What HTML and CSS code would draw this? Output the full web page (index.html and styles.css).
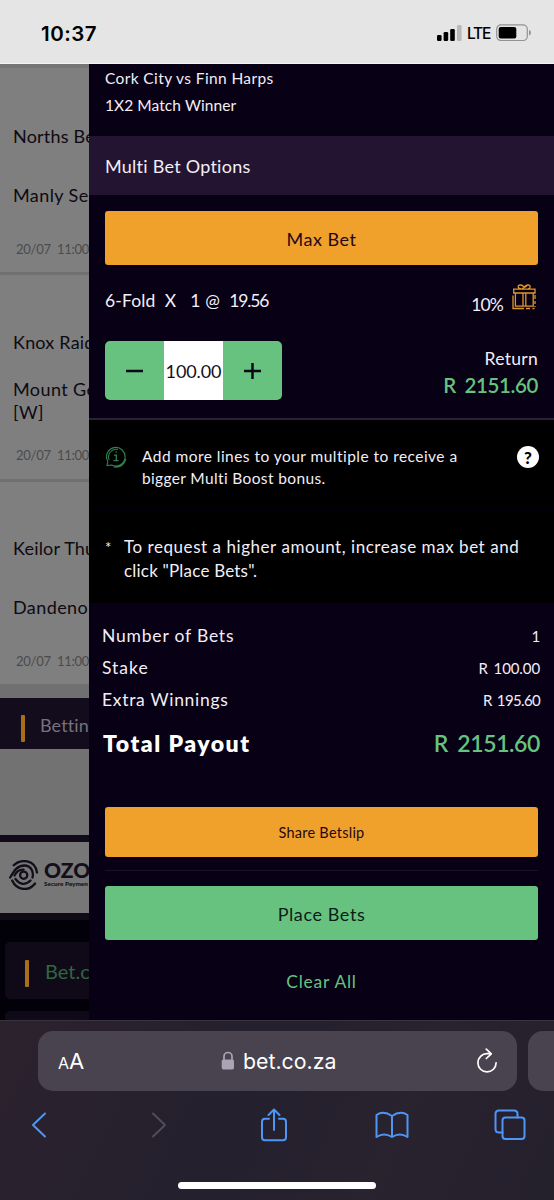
FILE: index.html
```html
<!DOCTYPE html>
<html lang="en">
<head>
<meta charset="utf-8">
<title>Betslip</title>
<link rel="stylesheet" href="styles.css">
</head>
<body>
<div class="phone">
  <header class="status">
    <span class="clock">10:37</span>
    <svg class="signal" width="25" height="16" viewBox="0 0 25 16"><rect x="0" y="10" width="4.6" height="6" rx="1.3"/><rect x="6.6" y="7" width="4.6" height="9" rx="1.3"/><rect x="13.2" y="4" width="4.6" height="12" rx="1.3"/><rect x="20" y="0" width="4.6" height="16" rx="1.3" fill="#b9b9b9"/></svg>
    <span class="network">LTE</span>
    <svg class="battery" width="36" height="18" viewBox="0 0 36 18"><rect x=".7" y=".9" width="30.6" height="15.6" rx="4.2" fill="none" stroke="#929292" stroke-width="1.2"/><rect x="2.7" y="2.9" width="17.6" height="11.6" rx="2"/><path d="M33 6q2 .6 2 2.7T33 11.400z" fill="#929292"/></svg>
  </header>

  <main class="screen">
    <section class="page">
      <div class="match first">
        <p class="team">Norths Be</p><p class="team second">Manly Se</p>
        <p class="date">20/07&nbsp; 11:00</p>
      </div>
      <div class="match mid">
        <p class="team">Knox Raid</p><p class="team wrapped">Mount Ge<br>[W]</p>
        <p class="date">20/07&nbsp; 11:00</p>
      </div>
      <div class="match last">
        <p class="team">Keilor Thu</p><p class="team second">Dandeno</p>
        <p class="date">20/07&nbsp; 11:00</p>
      </div>
      <div class="gap"></div>
      <div class="betting"><i class="bar"></i><span>Bettin</span></div>
      <div class="blank"></div>
      <div class="ozow">
        <svg class="swirl" width="30" height="30" viewBox="0 0 30 30" fill="none" stroke="#130f1a" stroke-width="2.3" stroke-linecap="round"><circle cx="14.700" cy="15.200" r="3.600"/><path d="M4.800 5.200C12-1.500 26-.5 28 12.500M1.200 17.500C5 11 8 5.500 15.500 5.500C22 5.500 25 12 23.500 17.500M5.500 15.500Q8.500 9.500 14.500 9.700M3.200 20.500C8 31 20 31.500 26 23.500M6.500 19Q13.500 28 21.500 20.500"/></svg>
        <div class="ozow-text"><b>OZO</b><small>Secure Paymen</small></div>
      </div>
      <div class="site">
        <div class="site-card"><i class="bar"></i><span>Bet.c</span></div>
        <div class="site-card next"></div>
      </div>
    </section>

    <section class="slip">
      <div class="event"><p class="e1">Cork City vs Finn Harps</p><p class="e2">1X2 Match Winner</p></div>
      <h2 class="options">Multi Bet Options</h2>
      <div class="multi">
        <button class="btn max">Max Bet</button>
        <div class="fold">
          <span class="odds">6-Fold&nbsp; X&nbsp;&nbsp; 1 @&nbsp; <span class="price">19.56</span></span>
          <span class="boost">10%</span>
          <svg class="gift" width="24" height="26" viewBox="0 0 24 26" fill="none" stroke="#e0952c" stroke-width="1.300"><path d="M1.700 5.200H23V9H1.700zM3.400 9v13.200h17.800V9M11 9v13M13.800 9v13M9 5C5.500 4.600 5.300 1 8.300 1Q10.500 1 12.200 3.200Q14 1 16 1C19 1 18.800 4.600 16 5M9.500 5l5.500-3"/><path d="M1 11.500v13h11M14 24.500h4M20.500 24.500h2M23 11v4M23 17v3M23 22v1"/></svg>
        </div>
        <div class="stake">
          <div class="stepper"><button>
            <svg width="17" height="17" viewBox="0 0 17 17"><path d="M0 8h17"/></svg></button><span class="amount">100.00</span><button>
            <svg width="17" height="17" viewBox="0 0 17 17"><path d="M0 8h17M8.500 0v16"/></svg></button></div>
          <div class="return"><p class="label">Return</p><p class="value">R 2151.60</p></div>
        </div>
      </div>
      <div class="info">
        <svg class="bubble" width="22" height="22" viewBox="0 0 22 22" fill="none" stroke="#347f50" stroke-width="1.100"><path d="M2 19.500l.8-4A9.300 9.300 0 1 1 6.500 19zM9 21Q18 22 20.900 13M4.200 14A7.600 7.600 0 0 1 13 3.500"/><path d="M9 9.200h2.300v5M8.600 14.600h5M10.500 6h1.200" stroke-width="1.300"/></svg>
        <p>Add more lines to your multiple to receive a<br><span class="i2">bigger Multi Boost bonus.</span></p>
        <span class="help">?</span>
      </div>
      <div class="note"><span class="star">*</span><p>To request a higher amount, increase max bet and<br><span class="n2">click "Place Bets".</span></p></div>
      <div class="totals">
        <div class="row"><span class="r1">Number of Bets</span><span class="num">1</span></div>
        <div class="row"><span class="r2">Stake</span><span class="num">R 100.00</span></div>
        <div class="row"><span class="r3">Extra Winnings</span><span class="num extra">R 195.60</span></div>
        <div class="row total"><span>Total Payout</span><span class="payout">R 2151.60</span></div>
      </div>
      <div class="actions">
        <button class="btn share">Share Betslip</button>
        <hr>
        <button class="btn place">Place Bets</button>
        <a class="clear">Clear All</a>
      </div>
    </section>
  </main>

  <footer class="browser">
    <div class="tabs">
      <div class="address">
        <span class="reader"><small>A</small>A</span>
        <span class="url"><svg width="14" height="20" viewBox="0 0 14 20"><path d="M3 9V5.500a4 4 0 0 1 8 0V9" fill="none" stroke="#aaa4b4" stroke-width="1.700"/><rect x=".7" y="8.500" width="12.300" height="10" rx="1.700" fill="#aaa4b4"/></svg>bet.co.za</span>
        <svg class="reload" width="22" height="26" viewBox="0 0 22 26" fill="none" stroke="#fff" stroke-width="1.700" stroke-linecap="round" stroke-linejoin="round"><path d="M14.500 5.700H11a9.100 9.100 0 1 0 9.100 9.100M10.300 1.200l5 4.600-5 4.700"/></svg>
      </div>
      <div class="next-tab"></div>
    </div>
    <nav class="tools">
      <svg width="16" height="28" viewBox="0 0 16 28"><path d="M14 2.500 2 14l12 11.500"/></svg>
      <svg class="off" width="20" height="28" viewBox="-4 0 20 28"><path d="M2 2.500 14 14 2 25.500"/></svg>
      <svg width="28" height="34" viewBox="0 0 28 34"><path d="M9 10.700H5Q2 10.700 2 13.700V29.300Q2 32.300 5 32.300H23Q26 32.300 26 29.300V13.700Q26 10.700 23 10.700H19M14 22V1.500M8.500 7 14 1.500 19.500 7"/></svg>
      <svg width="34" height="28" viewBox="0 0 34 28"><path d="M17 5Q8.500-1 1.500 4V26Q9 21 17 26Q25 21 32.500 26V4Q25.500-1 17 5V26"/></svg>
      <svg width="32" height="32" viewBox="0 0 32 32"><path d="M8.500 23.500H5Q1.500 23.500 1.500 20V5Q1.500 1.500 5 1.500H20Q23.500 1.500 23.500 5V8.500"/><rect x="8.500" y="8.500" width="22" height="21.500" rx="3"/></svg>
    </nav>
    <div class="home"></div>
  </footer>
</div>
</body>
</html>
```
FILE: styles.css
```css
* { box-sizing: border-box; margin: 0; padding: 0; }
body { width: 554px; height: 1200px; overflow: hidden; background: #080014; font-family: Lato, sans-serif; }
button { border: 0; font: inherit; color: inherit; background: none; }
svg { display: block; flex: none; }
p, span, h2, a { white-space: nowrap; }

.phone { display: flex; flex-direction: column; height: 1200px; }

.status { flex: none; display: flex; height: 64px; padding: 25px 22px 0 41px; background: #e5e5e5; border-bottom: 1px solid #f4f4f4; font-family: Inter, sans-serif; }
.clock { flex: 1; font-size: 20.500px; font-weight: 600; line-height: 17px; letter-spacing: .5px; }
.signal { margin-right: 5px; }
.network { width: 29px; font-size: 15.500px; font-weight: 500; line-height: 18px; letter-spacing: -1.2px; }
.battery { margin-top: -1px; }

.screen { flex: none; display: grid; grid-template-columns: 89px 465px; height: 956px; }

.page { height: 956px; overflow: hidden; background: #7f7f7f; color: #0d0a12; border-top: 4px solid #757575; }
.match { padding-left: 13px; border-bottom: 3px solid #707070; height: 207px; font-size: 18px; letter-spacing: .2px; }
.match .team { line-height: 24px; }
.match .second { margin-top: 35px; letter-spacing: .4px; }
.match .date { margin: 30px 0 0 3px; font-size: 13px; line-height: 24px; color: #4b4b4d; letter-spacing: -.25px; }
.first { padding-top: 56px; }
.mid { padding-top: 55px; }
.match.mid .wrapped { line-height: 23px; margin-top: 24px; letter-spacing: .4px; }
.match.mid .date { margin-top: 19px; }
.last { padding-top: 55px; border: 0; height: 202px; }
.last .team { margin-top: -1px; }
.last .second { margin-top: 35px; }
.gap { height: 14px; background: #707070; }
.betting { display: flex; height: 51px; padding-left: 21px; background: #130c1c; color: #77717e; font-size: 18px; line-height: 55px; letter-spacing: .1px; }
.bar { flex: none; display: block; width: 4px; height: 27px; border-radius: 1px; background: #a96e1b; }
.betting .bar { margin: 17px 15px 0 0; }
.blank { height: 86px; background: #727272; }
.ozow { display: flex; height: 85px; padding: 18px 0 0 9px; background: #777; border-top: 7px solid #110a1a; border-bottom: 7px solid #110b18; color: #130f1a; }
.ozow-text { margin-left: 5px; }
.ozow-text b { display: block; height: 20px; font-size: 21px; line-height: 20px; font-weight: 900; letter-spacing: 0; }
.ozow-text small { display: block; font-size: 6.400px; line-height: 8px; font-weight: 900; white-space: nowrap; }
.site { display: flex; flex-direction: column; gap: 12px; height: 110px; padding: 22px 0 0 5px; background: #020008; }
.site-card { flex: none; display: flex; height: 57px; padding-left: 20px; border-radius: 5px 0 0 5px; background: #100a18; color: #2f6643; font-size: 20px; line-height: 59px; }
.site-card .bar { margin: 18px 16px 0 0; }

.slip { background: #080014; color: #f3eef7; }
.event { height: 72px; padding: 1px 16px; font-size: 15.500px; line-height: 27px; }
.event .e1 { letter-spacing: .38px; }
.event .e2 { letter-spacing: .08px; }
.options { height: 59px; padding: 0 16px; background: #231532; font-size: 18px; font-weight: 400; line-height: 61px; letter-spacing: .25px; }
.multi { height: 225px; padding: 16px; border-bottom: 2px solid #2c2238; }
.btn { display: block; width: 433px; border-radius: 3px; background: #f0a12b; color: #250817; }
.max { height: 54px; font-size: 18px; line-height: 56px; letter-spacing: .5px; }
.fold { display: flex; height: 76px; font-size: 17.500px; }
.odds { flex: 1; line-height: 71px; letter-spacing: .15px; }
.price { letter-spacing: -1.1px; }
.boost { line-height: 79px; margin-right: 9px; letter-spacing: -.9px; }
.gift { margin: 19px 2px 0 0; }
.stake { display: flex; justify-content: space-between; }
.stepper { display: grid; grid-template-columns: 59px 59px 59px; width: 177px; height: 59px; border-radius: 5px; overflow: hidden; background: #67c27f; }
.stepper button { display: grid; place-items: center; }
.stepper path { stroke: #0c0714; stroke-width: 2.500; }
.amount { background: #fff; color: #15101c; font-size: 18px; line-height: 61px; text-align: center; letter-spacing: -.1px; }
.return { text-align: right; padding-top: 4px; }
.return .label { font-size: 17.500px; line-height: 27px; letter-spacing: .3px; }
.return .value { font-size: 20.500px; line-height: 27px; font-weight: 600; color: #67c27f; letter-spacing: -.4px; word-spacing: 4px; }
.info { display: flex; height: 91px; padding: 26px 15px 0 16px; background: #000; border-bottom: 1px solid #03000d; font-size: 15.500px; line-height: 22px; letter-spacing: .46px; }
.info p { margin-top: -1.500px; }
.info .i2 { letter-spacing: .36px; }
.bubble { margin-right: 15px; }
.help { margin-left: auto; width: 22px; height: 22px; border-radius: 50%; background: #fff; color: #000; font-size: 17px; line-height: 23px; font-weight: 900; text-align: center; letter-spacing: 0; }
.note { display: flex; height: 92px; padding: 24px 15px 0 16px; background: #000; font-size: 17px; line-height: 24px; letter-spacing: .55px; }
.note .n2 { letter-spacing: .2px; }
.star { width: 19px; font-size: 15px; }
.totals { height: 204px; padding: 17px 14px 0 13px; font-size: 17.500px; line-height: 32px; }
.row { display: flex; justify-content: space-between; letter-spacing: .8px; }
.row .r2 { letter-spacing: 1px; }
.row .r3 { letter-spacing: .7px; }
.row .num { font-size: 15px; letter-spacing: -.1px; word-spacing: 2px; }
.row .extra { letter-spacing: -.65px; }
.total { padding-left: 1px; font-size: 23px; font-weight: 800; line-height: 55px; color: #fff; letter-spacing: 1.5px; }
.payout { font-weight: 600; color: #67c27f; letter-spacing: -.4px; word-spacing: 4px; }
.actions { padding-left: 16px; }
.share { height: 50px; font-size: 14.500px; line-height: 51px; letter-spacing: .25px; }
.actions hr { width: 433px; border: 0; height: 1px; margin: 13px 0 15px; background: #1b1226; }
.place { height: 54px; font-size: 18px; line-height: 56px; background: #67c27f; color: #0a1d18; letter-spacing: .6px; }
.clear { display: block; width: 433px; margin-top: 26px; font-size: 17.500px; line-height: 32px; text-align: center; color: #67c27f; letter-spacing: .75px; }

.browser { flex: none; height: 180px; background: linear-gradient(115deg, #2b222e, #24202d 45%, #29222f 70%, #24202c); border-top: 1px solid #38333e; font-family: Inter, sans-serif; overflow: hidden; }
.tabs { display: flex; gap: 11px; padding: 10px 0 0 38px; }
.address { flex: none; display: flex; align-items: center; width: 479px; height: 60px; padding: 0 19px 0 20px; border-radius: 15px; background: #48434f; color: #fff; }
.reader { width: 163px; font-size: 22px; }
.reader small { font-size: 16px; }
.url { flex: 1; display: flex; align-items: center; gap: 8px; font-size: 21.300px; }
.next-tab { flex: none; width: 60px; height: 60px; border-radius: 15px; background: #48434f; }
.tools { display: grid; grid-template-columns: repeat(5, 117.700px); align-items: center; justify-items: center; height: 34px; margin: 17px 0 0 -20px; }
.tools svg { fill: none; stroke: #4e95f5; stroke-width: 2; stroke-linecap: round; stroke-linejoin: round; }
.tools .off { stroke: #514c58; }
.home { width: 198px; height: 7px; margin: 40px 0 0 178px; border-radius: 4px; background: #fff; }
```
